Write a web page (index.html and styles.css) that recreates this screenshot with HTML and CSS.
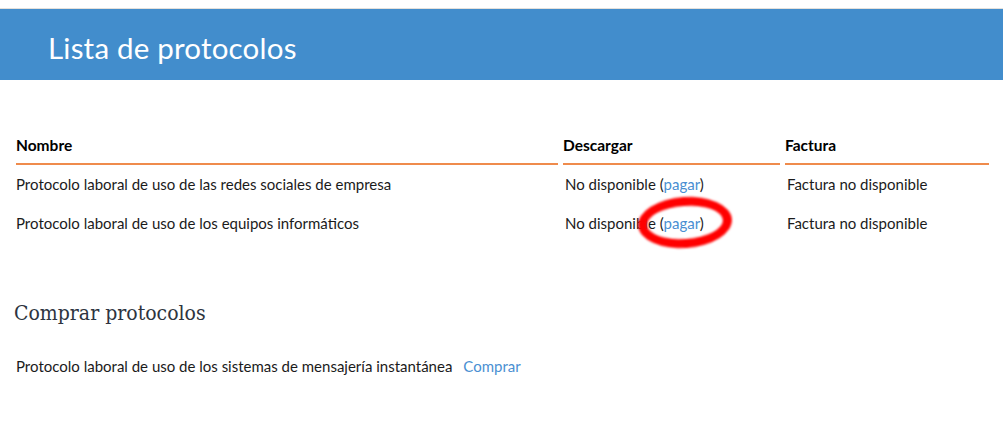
FILE: index.html
```html
<!DOCTYPE html>
<html lang="es">
<head>
<meta charset="utf-8">
<title>Lista de protocolos</title>
<link rel="stylesheet" href="styles.css">
</head>
<body>
<div class="page">
  <header class="banner">
    <h1 class="banner-title">Lista de protocolos</h1>
  </header>
  <main class="content">
    <table class="protocols">
      <thead>
        <tr>
          <th class="col-name">Nombre</th>
          <th class="col-download">Descargar</th>
          <th class="col-invoice">Factura</th>
        </tr>
      </thead>
      <tbody>
        <tr>
          <td class="cell-name">Protocolo laboral de uso de las redes sociales de empresa</td>
          <td class="cell-pad">No disponible (<a class="link" href="#">pagar</a>)</td>
          <td class="cell-pad">Factura no disponible</td>
        </tr>
        <tr>
          <td class="cell-name">Protocolo laboral de uso de los equipos informáticos</td>
          <td class="cell-pad marked">No disponible (<a class="link" href="#">pagar</a>)<span class="circle"></span></td>
          <td class="cell-pad">Factura no disponible</td>
        </tr>
      </tbody>
    </table>
    <h2 class="section-title">Comprar protocolos</h2>
    <div class="buy-row">
      <span class="buy-name">Protocolo laboral de uso de los sistemas de mensajería instantánea</span>
      <a class="link" href="#">Comprar</a>
    </div>
  </main>
</div>
</body>
</html>
```
FILE: styles.css
```css
html, body {
  margin: 0;
  padding: 0;
  background: #ffffff;
}
body {
  font-family: "Lato", "Noto Sans", sans-serif;
  font-size: 15px;
  color: #1b1b1b;
}
.page {
  padding-top: 8px;
}
.banner {
  border-top: 1px solid #e3e0dc;
  background: #428dcc;
  height: 71px;
  display: flex;
  align-items: center;
}
.banner-title {
  margin: 0;
  padding: 5px 0 0 48px;
  font-weight: 400;
  font-size: 29.5px;
  color: #ffffff;
  letter-spacing: 0.2px;
}
.content {
  padding: 55px 0 0 11px;
}
.protocols {
  border-collapse: separate;
  border-spacing: 5px 0;
  width: 983px;
  table-layout: fixed;
}
.protocols th {
  text-align: left;
  font-weight: 700;
  font-size: 15.5px;
  color: #000;
  line-height: 20px;
  padding: 0 0 8px 0;
  border-bottom: 2px solid #ef8b4c;
}
.col-name { width: 542px; }
.col-download { width: 217px; }
.col-invoice { width: 204px; }
.protocols td {
  line-height: 20px;
  padding: 9px 0 10px 0;
  vertical-align: top;
}
.protocols td.cell-pad {
  padding-left: 2px;
}
.link {
  color: #4a8fd2;
  text-decoration: none;
}
.marked {
  position: relative;
}
.circle {
  position: absolute;
  left: 75px;
  top: -7px;
  width: 76px;
  height: 33px;
  border: 9px solid #ff0000;
  border-radius: 50%;
  transform: rotate(-4deg);
  filter: blur(1.2px);
  pointer-events: none;
}
.section-title {
  margin: 57px 0 0 3px;
  font-family: "DejaVu Serif", serif;
  font-stretch: condensed;
  font-weight: 400;
  font-size: 21px;
  line-height: 26px;
  color: #2e3440;
}
.buy-row {
  display: flex;
  gap: 11px;
  margin: 30px 0 0 5px;
  line-height: 20px;
}
```
